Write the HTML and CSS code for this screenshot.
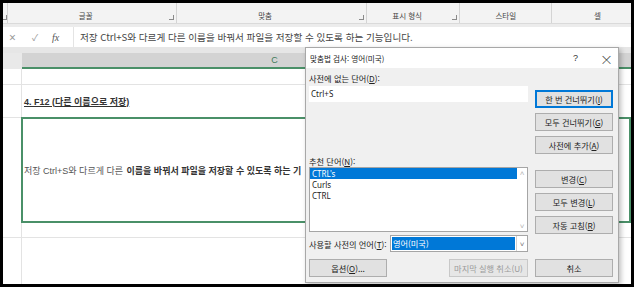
FILE: index.html
```html
<!DOCTYPE html>
<html lang="ko">
<head>
    <meta charset="UTF-8">
    <title>맞춤법 검사</title>
    <link rel="stylesheet" href="styles.css">
</head>
<body>

    <div class="frame">
        <!-- Ribbon group labels -->
        <div class="ribbon">
            <div class="grp grp-edge"><span class="launcher"></span></div>
            <div class="grp grp-font"><span class="grp-label">글꼴</span><span class="launcher"></span></div>
            <div class="grp grp-align"><span class="grp-label">맞춤</span><span class="launcher"></span></div>
            <div class="grp grp-num"><span class="grp-label">표시 형식</span><span class="launcher"></span></div>
            <div class="grp grp-style"><span class="grp-label">스타일</span></div>
            <div class="grp grp-cell"><span class="grp-label">셀</span></div>
        </div>
        <div class="ribbon-gap"></div>

        <!-- Formula bar -->
        <div class="fbar">
            <div class="fbar-icons">
                <span class="fb-x">&times;</span>
                <span class="fb-ok">&#10003;</span>
                <span class="fb-fx">fx</span>
            </div>
            <div class="fbar-input">저장 Ctrl+S와 다르게 다른 이름을 바꿔서 파일을 저장할 수 있도록 하는 기능입니다.</div>
        </div>
        <div class="fbar-gap"></div>

        <!-- Column header -->
        <div class="colhead">
            <div class="corner"></div>
            <div class="col-c">C</div>
        </div>

        <!-- Sheet rows -->
        <div class="sheet">
            <div class="row r1"><div class="rh"></div><div class="cell"></div></div>
            <div class="row r2"><div class="rh"></div><div class="cell"><span class="title-cell">4. F12 (다른 이름으로 저장)</span></div></div>
            <div class="row r3"><div class="rh"></div><div class="cell cell-sel"><span class="clip"><span class="plain">저장 Ctrl+S와 다르게 다른</span> <span class="strong">이름을 바꿔서 파일을 저장할 수 있도록 하는 기</span></span></div></div>
            <div class="row r4"><div class="rh"></div><div class="cell"></div></div>
            <div class="row r5"><div class="rh"></div><div class="cell"></div></div>
        </div>

        <!-- Spelling dialog -->
        <div class="dialog">
            <div class="dlg-title">
                <span class="dlg-caption">맞춤법 검사: 영어(미국)</span>
                <span class="dlg-help">?</span>
                <span class="dlg-close">&times;</span>
            </div>
            <div class="dlg-body">
                <div class="dlg-main">
                    <div class="dlg-left">
                        <div class="dlg-label">사전에 없는 단어(<u>D</u>):</div>
                        <div class="word-box">Ctrl+S</div>
                        <div class="dlg-label label-suggest">추천 단어(<u>N</u>):</div>
                        <div class="list">
                            <div class="list-items">
                                <div class="item selected">CTRL's</div>
                                <div class="item">Curls</div>
                                <div class="item">CTRL</div>
                            </div>
                            <div class="scroll">
                                <span class="arrow">&#708;</span>
                                <span class="arrow">&#709;</span>
                            </div>
                        </div>
                        <div class="lang-row">
                            <span class="dlg-label">사용할 사전의 언어(<u>T</u>):</span>
                            <div class="combo">
                                <span class="combo-value"><span class="combo-sel">영어(미국)</span></span>
                                <span class="combo-btn">&#709;</span>
                            </div>
                        </div>
                    </div>
                    <div class="dlg-right">
                        <div class="btn btn-default">한 번 건너뛰기(<u>I</u>)</div>
                        <div class="btn">모두 건너뛰기(<u>G</u>)</div>
                        <div class="btn">사전에 추가(<u>A</u>)</div>
                        <div class="btn btn-gap">변경(<u>C</u>)</div>
                        <div class="btn">모두 변경(<u>L</u>)</div>
                        <div class="btn">자동 고침(<u>R</u>)</div>
                    </div>
                </div>
                <div class="dlg-bottom">
                    <div class="dlg-bottom-left">
                        <div class="btn btn-small">옵션(<u>O</u>)...</div>
                        <div class="btn btn-small btn-disabled">마지막 실행 취소(U)</div>
                    </div>
                    <div class="btn">취소</div>
                </div>
            </div>
        </div>
    </div>

</body>
</html>
```

FILE: styles.css
```css
/* Base */
html, body {
    margin: 0;
    padding: 0;
    background-color: white;
    font-family: "Noto Sans", "Noto Sans CJK KR", sans-serif;
}
.frame {
    position: relative;
    width: 634px;
    height: 287px;
    box-sizing: border-box;
    border: 3px solid black;
    overflow: hidden;
    background-color: white;
}

/* Ribbon */
.ribbon {
    display: flex;
    height: 20px;
    background-color: #f3f3f3;
    border-bottom: 1px solid #dadada;
}
.grp {
    position: relative;
    display: flex;
    align-items: flex-end;
    justify-content: center;
    padding-right: 12px;
    padding-bottom: 2px;
    box-sizing: border-box;
    border-right: 1px solid #d4d4d4;
    font-family: "Noto Sans CJK KR", sans-serif;
    font-size: 7.5px;
    color: #444;
}
.grp-edge { width: 5px; padding: 0; }
.grp-font { width: 171px; }
.grp-align { width: 193px; }
.grp-num { width: 95px; }
.grp-style { width: 93px; padding-right: 0; }
.grp-cell { width: 80px; padding-left: 12px; padding-right: 0; border-right: none; }
.grp-label {
    line-height: 10px;
}
.launcher {
    position: absolute;
    right: 2px;
    bottom: 3px;
    width: 4px;
    height: 4px;
    border-left: 1px solid #8a8a8a;
    border-bottom: 1px solid #8a8a8a;
    transform: scaleX(-1);
}
.grp-edge .launcher { right: 0; }
.ribbon-gap {
    height: 3px;
    background-color: #ececec;
}

/* Formula bar */
.fbar {
    display: flex;
    height: 20px;
    background-color: white;
}
.fbar-icons {
    display: flex;
    align-items: center;
    width: 64px;
    padding-left: 6px;
    color: #9a9a9a;
    font-size: 11px;
}
.fb-x { width: 23px; font-size: 12px; }
.fb-ok { width: 20px; font-size: 9px; }
.fb-fx {
    font-family: "Liberation Serif", serif;
    font-style: italic;
    font-size: 10px;
    color: #555;
}
.fbar-input {
    flex: 1;
    display: flex;
    align-items: center;
    padding-left: 6px;
    border-left: 1px solid #e4e4e4;
    font-family: "Noto Sans CJK KR", sans-serif;
    font-size: 9.6px;
    color: #444;
    white-space: nowrap;
}
.fbar-gap {
    height: 6px;
    background-color: #e6e6e6;
}

/* Column header */
.colhead {
    display: flex;
    height: 16px;
}
.corner {
    width: 19px;
    background-color: #e9e9e9;
}
.col-c {
    flex: 1;
    height: 14px;
    line-height: 14px;
    background-color: #d3d3d3;
    border-bottom: 2px solid #4a9068;
    text-align: center;
    padding-right: 104px;
    font-family: "Liberation Sans", sans-serif;
    font-size: 9px;
    color: #3f7a5a;
}

/* Sheet */
.row {
    display: flex;
    box-sizing: border-box;
    border-bottom: 1px solid #e3e3e3;
}
.rh {
    width: 18px;
    border-right: 1px solid #e3e3e3;
}
.cell {
    flex: 1;
    display: flex;
    align-items: center;
    padding-left: 2px;
    white-space: nowrap;
    font-family: "Liberation Sans", "Noto Sans CJK KR", sans-serif;
    font-size: 9px;
    color: #444;
}
.r1 { height: 16px; }
.r2 { height: 33px; }
.r3 { height: 105px; border-bottom: none; }
.r4 { height: 15px; }
.r5 { height: 60px; border-bottom: none; }
.title-cell {
    font-weight: bold;
    text-decoration: underline;
    color: #333;
}
.cell-sel {
    margin-top: -1px;
    margin-left: -1px;
    border: 2px solid #4a9068;
    padding-left: 1px;
}
.clip {
    display: block;
    width: 279px;
    overflow: hidden;
}
.plain {
    color: #555;
}
.strong {
    font-weight: bold;
    color: #333;
    margin-left: 1px;
}

/* Dialog */
.dialog {
    position: absolute;
    left: 302px;
    top: 44px;
    width: 314px;
    height: 236px;
    box-sizing: border-box;
    border: 1px solid #a8a8a8;
    background-color: #f0f0f0;
    box-shadow: 2px 2px 5px rgba(0, 0, 0, 0.25);
    font-family: "Noto Sans CJK KR", sans-serif;
    font-size: 8.5px;
    color: #222;
}
.dlg-title {
    display: flex;
    align-items: center;
    height: 20px;
    background-color: white;
    padding-left: 4px;
    font-size: 7.6px;
}
.dlg-caption {
    flex: 1;
}
.dlg-help {
    width: 27px;
    font-family: "Liberation Sans", sans-serif;
    font-size: 9px;
    color: #333;
}
.dlg-close {
    width: 18px;
    font-size: 13px;
    font-weight: 300;
    color: #333;
}
.dlg-body {
    padding: 4px 5px 6px 3px;
}
.dlg-main {
    display: grid;
    grid-template-columns: 219px 78px;
    column-gap: 7px;
}
.dlg-label {
    height: 12px;
    line-height: 12px;
    font-size: 8.2px;
    color: #222;
}
.word-box {
    height: 16px;
    margin-top: 2px;
    line-height: 15px;
    padding-left: 2px;
    background-color: white;
    font-family: "Noto Sans", sans-serif;
    font-size: 8px;
}
.label-suggest {
    margin-top: 53px;
}
.list {
    display: flex;
    height: 65px;
    box-sizing: border-box;
    border: 1px solid #a5a5a5;
    background-color: white;
}
.list-items {
    flex: 1;
    font-family: "Noto Sans", sans-serif;
    font-size: 8px;
}
.item {
    height: 11px;
    line-height: 11px;
    padding-left: 2px;
}
.item.selected {
    background-color: #0078d7;
    color: white;
}
.scroll {
    width: 10px;
    display: flex;
    flex-direction: column;
    justify-content: space-between;
    align-items: center;
    color: #b5b5b5;
    font-size: 8px;
    line-height: 10px;
}
.lang-row {
    display: flex;
    align-items: center;
    justify-content: space-between;
    margin-top: 3px;
}
.combo {
    display: flex;
    width: 138px;
    height: 17px;
    box-sizing: border-box;
    border: 1px solid #a5a5a5;
    background-color: white;
}
.combo-value {
    flex: 1;
    padding: 1px;
    display: flex;
}
.combo-sel {
    flex: 1;
    background-color: #0078d7;
    color: white;
    line-height: 13px;
    padding-left: 1px;
    font-size: 8.2px;
}
.combo-btn {
    width: 10px;
    border-left: 1px solid #d0d0d0;
    text-align: center;
    color: #777;
    font-size: 8px;
    line-height: 15px;
}
.dlg-right {
    display: flex;
    flex-direction: column;
    gap: 5px;
    padding-top: 18px;
}
.btn {
    height: 18px;
    box-sizing: border-box;
    border: 1px solid #adadad;
    background-color: #e1e1e1;
    text-align: center;
    line-height: 16px;
    font-size: 8.2px;
    color: #222;
}
.btn-default {
    border: 2px solid #0078d7;
    line-height: 14px;
}
.btn-gap {
    margin-top: 11px;
}
.dlg-bottom {
    display: grid;
    grid-template-columns: 219px 78px;
    column-gap: 7px;
    margin-top: 7px;
}
.dlg-bottom-left {
    display: flex;
    justify-content: space-between;
}
.btn-small {
    width: 78px;
}
.btn-disabled {
    width: 79px;
    border-color: #c8c8c8;
    background-color: #e6e6e6;
    color: #9a9a9a;
}
```
